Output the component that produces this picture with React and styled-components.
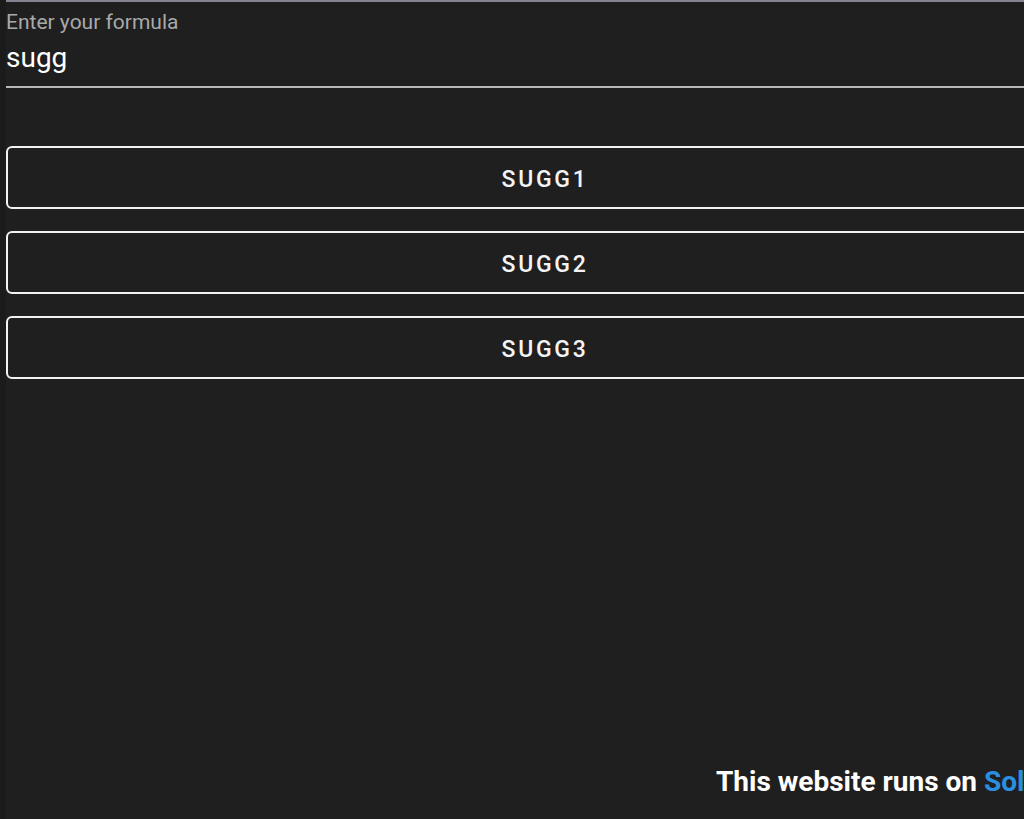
import React from "react";
import styled, { createGlobalStyle } from "styled-components";

const Global = createGlobalStyle`
  html, body { margin: 0; padding: 0; background: #1f1f1f; overflow: hidden; }
  body { font-family: Roboto, "Liberation Sans", sans-serif; }
`;

const Frame = styled.div`
  display: flex;
  height: 819px;
  background: #1f1f1f;
`;

const Gutter = styled.div`
  width: 6px;
  flex-shrink: 0;
  background: #1b1b1b;
`;

const Main = styled.div`
  width: 1078px;
  flex-shrink: 0;
  display: flex;
  flex-direction: column;
  border-top: 2px solid #85838f;
`;

const Field = styled.div`
  display: flex;
  flex-direction: column;
  border-bottom: 2px solid #b8b8b8;
`;

const Label = styled.label`
  color: #a9a9a9;
  font-size: 21px;
  line-height: 24px;
  margin-top: 8px;
`;

const Input = styled.input`
  background: transparent;
  border: none;
  outline: none;
  color: #ffffff;
  font-family: Roboto, "Liberation Sans", sans-serif;
  font-size: 28px;
  padding: 0;
  margin: 6px 0 12px;
  height: 34px;
`;

const List = styled.div`
  display: flex;
  flex-direction: column;
  gap: 22px;
  margin-top: 58px;
`;

const SuggButton = styled.button`
  height: 63px;
  padding: 3px 0 0;
  background: transparent;
  border: 2px solid #f2f2f2;
  border-radius: 6px;
  color: #f4f4f4;
  font-family: Roboto, "Liberation Sans", sans-serif;
  font-size: 23px;
  font-weight: 500;
  letter-spacing: 2.7px;
  text-transform: uppercase;
  cursor: pointer;
`;

const Footer = styled.div`
  margin-top: auto;
  padding: 0 0 21px 710px;
  white-space: nowrap;
  color: #ffffff;
  font-size: 28px;
  font-weight: 700;
  line-height: 32px;
`;

const Accent = styled.span`
  color: #2a8fe0;
`;

export default function App() {
  return (
    <>
      <Global />
      <Frame>
        <Gutter />
        <Main>
          <Field>
            <Label htmlFor="formula">Enter your formula</Label>
            <Input id="formula" defaultValue="sugg" />
          </Field>
          <List>
            {["sugg1", "sugg2", "sugg3"].map((s) => (
              <SuggButton key={s}>{s}</SuggButton>
            ))}
          </List>
          <Footer>
            This website runs on <Accent>SolidJS</Accent>
          </Footer>
        </Main>
      </Frame>
    </>
  );
}
